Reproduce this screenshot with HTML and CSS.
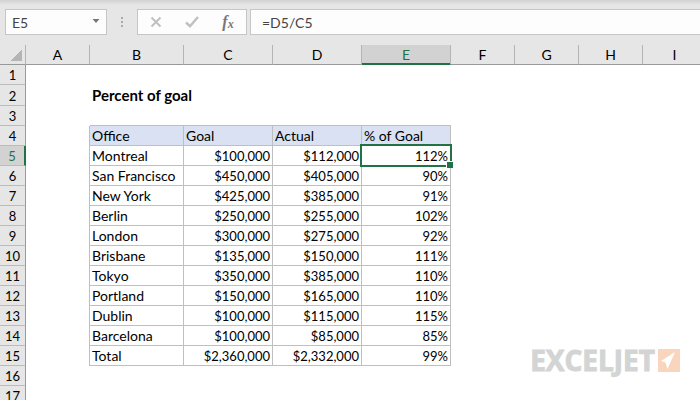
FILE: index.html
```html
<!DOCTYPE html>
<html lang="en">
<head>
    <meta charset="UTF-8">
    <meta name="viewport" content="width=device-width, initial-scale=1.0">
    <title>Percent of goal</title>
    <link rel="stylesheet" href="styles.css">
</head>
<body>

<div class="formula-bar">
    <div class="name-box">
        <input type="text" value="E5" aria-label="Name box">
        <button type="button" class="arrow" aria-label="Show names">
            <svg width="8" height="4" viewBox="0 0 8 4"><path d="M0.5 0h7L4 4z" fill="#777"/></svg>
        </button>
    </div>
    <div class="dots"><i></i><i></i><i></i></div>
    <div class="tools">
        <button type="button" aria-label="Cancel">
            <svg width="12" height="12" viewBox="0 0 12 12"><path d="M1.5 1.500l9 9M10.500 1.500l-9 9" stroke="#c0c0c0" stroke-width="2" fill="none"/></svg>
        </button>
        <button type="button" aria-label="Enter">
            <svg width="14" height="12" viewBox="0 0 14 12"><path d="M1 6.500l4 3.700L13 1" stroke="#c0c0c0" stroke-width="2.400" fill="none"/></svg>
        </button>
        <button type="button" class="fx" aria-label="Insert function">f<span>x</span></button>
    </div>
    <input type="text" class="formula" value="=D5/C5" aria-label="Formula">
</div>

<div class="sheet">
    <table>
        <colgroup>
            <col class="rows"><col class="narrow"><col class="office">
            <col class="num"><col class="num"><col class="num">
            <col class="narrow"><col class="narrow"><col class="narrow"><col class="narrow">
        </colgroup>
        <thead>
            <tr><th class="corner"></th><th>A</th><th>B</th><th>C</th><th>D</th><th class="active">E</th><th>F</th><th>G</th><th>H</th><th>I</th></tr>
        </thead>
        <tbody>
            <tr><th>1</th></tr>
            <tr class="title"><th>2</th><td></td><td colspan="3">Percent of goal</td></tr>
            <tr class="above"><th>3</th><td></td><td></td><td></td><td></td><td></td></tr>
            <tr class="data head"><th>4</th><td></td><td>Office</td><td>Goal</td><td>Actual</td><td>% of Goal</td></tr>
            <tr class="data"><th class="active">5</th><td></td><td>Montreal</td><td>$100,000</td><td>$112,000</td><td class="selected">112%</td></tr>
            <tr class="data"><th>6</th><td></td><td>San Francisco</td><td>$450,000</td><td>$405,000</td><td>90%</td></tr>
            <tr class="data"><th>7</th><td></td><td>New York</td><td>$425,000</td><td>$385,000</td><td>91%</td></tr>
            <tr class="data"><th>8</th><td></td><td>Berlin</td><td>$250,000</td><td>$255,000</td><td>102%</td></tr>
            <tr class="data"><th>9</th><td></td><td>London</td><td>$300,000</td><td>$275,000</td><td>92%</td></tr>
            <tr class="data"><th>10</th><td></td><td>Brisbane</td><td>$135,000</td><td>$150,000</td><td>111%</td></tr>
            <tr class="data"><th>11</th><td></td><td>Tokyo</td><td>$350,000</td><td>$385,000</td><td>110%</td></tr>
            <tr class="data"><th>12</th><td></td><td>Portland</td><td>$150,000</td><td>$165,000</td><td>110%</td></tr>
            <tr class="data"><th>13</th><td></td><td>Dublin</td><td>$100,000</td><td>$115,000</td><td>115%</td></tr>
            <tr class="data"><th>14</th><td></td><td>Barcelona</td><td>$100,000</td><td>$85,000</td><td>85%</td></tr>
            <tr class="data"><th>15</th><td></td><td>Total</td><td>$2,360,000</td><td>$2,332,000</td><td>99%</td></tr>
            <tr><th>16</th></tr>
            <tr><th>17</th></tr>
        </tbody>
    </table>
</div>

<div class="logo">
    <span>EXCELJET</span>
    <svg width="22" height="23" viewBox="0 0 22 23"><path d="M0 0h22v23H0z" fill="#f9d5bd"/><path d="M17 3L3 12l4.500 1.500L9.500 20z" fill="#fff"/></svg>
</div>

</body>
</html>
```
FILE: styles.css
```css
* {
    box-sizing: border-box;
}
body {
    margin: 0;
    height: 100vh;
    overflow: hidden;
    display: flex;
    flex-direction: column;
    background-color: #fff;
    font-family: Lato, Carlito, sans-serif;
    font-size: 14px;
    color: #000;
}

/* formula bar */
.formula-bar {
    display: flex;
    flex: none;
    height: 45px;
    padding: 9px 0 10px 5px;
    background: linear-gradient(#d2d2d2, #e6e6e6 5px);
}
.name-box, .tools, .formula {
    border: 1px solid #c6c6c6;
    background-color: #fdfdfd;
}
input {
    font: inherit;
    color: #444;
    border: 0;
    outline: 0;
    min-width: 0;
}
button {
    display: flex;
    align-items: center;
    justify-content: center;
    padding: 0;
    border: 0;
    background: none;
}
.name-box {
    display: flex;
    width: 102px;
}
.name-box input {
    flex: 1;
    padding: 0 6px;
    background: none;
}
.arrow {
    width: 20px;
    padding-bottom: 2px;
}
.dots {
    display: flex;
    flex-direction: column;
    justify-content: center;
    align-items: center;
    gap: 2px;
    width: 30px;
}
.dots i {
    width: 2px;
    height: 2px;
    background-color: #aaa;
}
.tools {
    display: flex;
    width: 110px;
    margin-right: 3px;
}
.tools button {
    flex: 1;
}
.tools .fx {
    font: italic bold 16px "Liberation Serif", serif;
    color: #777;
}
.fx span {
    font-size: 12px;
    padding-top: 4px;
}
.formula {
    flex: 1;
    border-right: 0;
    padding: 0 11px;
}

/* grid */
.sheet {
    flex: 1;
    overflow: hidden;
}
table {
    table-layout: fixed;
    width: 706px;
    border-spacing: 0;
    line-height: 19px;
}
.rows { width: 26px; }
.narrow { width: 64px; }
.office { width: 94px; }
.num { width: 89px; }

th, td {
    height: 20px;
    padding: 0;
    font-weight: normal;
    white-space: nowrap;
}
th {
    background-color: #e6e6e6;
    border-right: 1px solid #999;
    border-bottom: 1px solid #bbb;
}
tbody th {
    padding-top: 1px;
    font-size: 13px;
    line-height: 18px;
}
thead th {
    border-right-color: #b4b4b4;
    border-bottom-color: #999;
}
thead .corner {
    background: linear-gradient(135deg, transparent 50%, #b4b4b4 50%) 10px 4px / 12px 12px no-repeat #e6e6e6;
}
th.active {
    color: #217346;
    background-color: #d2d2d2;
}
thead .active {
    box-shadow: inset 0 -1px #217346;
    border-bottom-color: #217346;
}
tbody .active {
    border-right: 2px solid #217346;
}
.title th, .title td {
    height: 21px;
}
.title td {
    padding-left: 2px;
    font-size: 15px;
    font-weight: bold;
}
.above td:nth-child(n+3) {
    border-bottom: 1px solid #bfbfbf;
}
.data td {
    border-right: 1px solid #bfbfbf;
}
.data td:nth-child(n+3) {
    padding: 0 2px;
    border-bottom: 1px solid #bfbfbf;
}
.data:not(.head) td:nth-child(n+4) {
    padding-top: 1px;
    font-size: 13px;
    line-height: 18px;
    text-align: right;
}
.head td:nth-child(n+3) {
    background-color: #d9e1f2;
}
.selected {
    position: relative;
}
.selected::before {
    content: "";
    position: absolute;
    inset: -2px;
    border: 2px solid #217346;
}
/* fill handle */
.selected::after {
    content: "";
    position: absolute;
    right: -3px;
    bottom: -3px;
    width: 6px;
    height: 6px;
    border: 1px solid #fff;
    border-width: 1px 0 0 1px;
    background-color: #217346;
}

.logo {
    position: absolute;
    right: 20px;
    bottom: 28px;
    display: flex;
    align-items: center;
    gap: 3px;
    font: bold 28px/24px "Open Sans", "Noto Sans", sans-serif;
    color: #d3d5d4;
    -webkit-text-stroke: 1px #d3d5d4;
}
```
